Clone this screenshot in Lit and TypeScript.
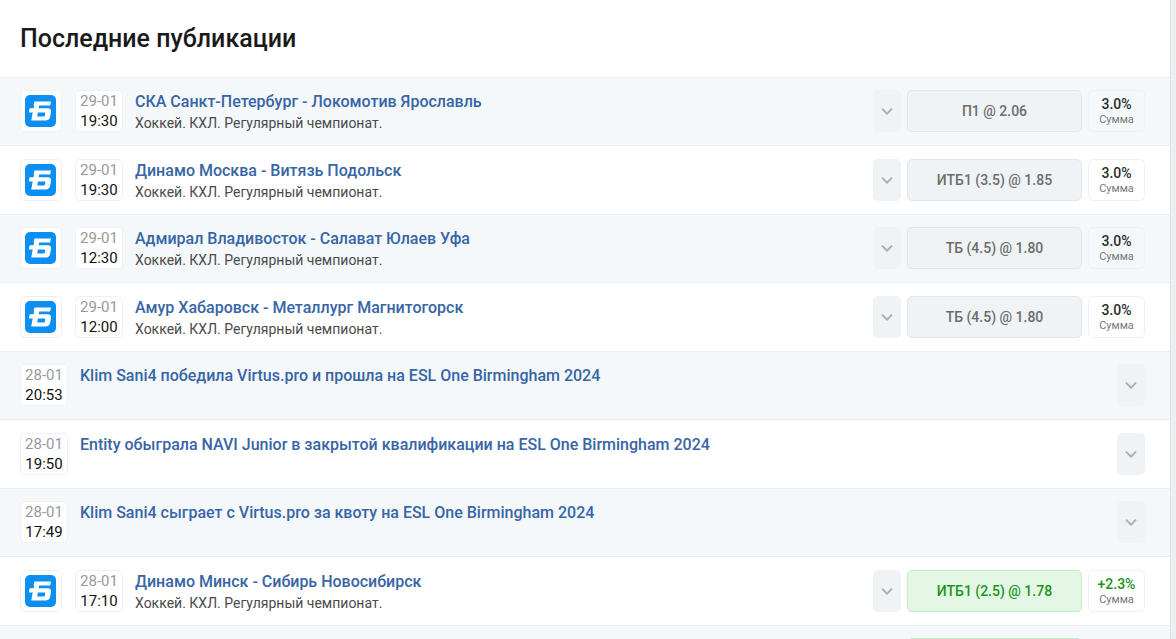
import { LitElement, html, css, nothing } from "lit";
import { customElement, property } from "lit/decorators.js";

interface Publication {
  date: string;
  time: string;
  title: string;
  league?: string;
  bet?: string;
  sum?: string;
  won?: boolean;
}

const KHL = "Хоккей. КХЛ. Регулярный чемпионат.";

const PUBLICATIONS: Publication[] = [
  { date: "29-01", time: "19:30", title: "СКА Санкт-Петербург - Локомотив Ярославль", league: KHL, bet: "П1 @ 2.06", sum: "3.0%" },
  { date: "29-01", time: "19:30", title: "Динамо Москва - Витязь Подольск", league: KHL, bet: "ИТБ1 (3.5) @ 1.85", sum: "3.0%" },
  { date: "29-01", time: "12:30", title: "Адмирал Владивосток - Салават Юлаев Уфа", league: KHL, bet: "ТБ (4.5) @ 1.80", sum: "3.0%" },
  { date: "29-01", time: "12:00", title: "Амур Хабаровск - Металлург Магнитогорск", league: KHL, bet: "ТБ (4.5) @ 1.80", sum: "3.0%" },
  { date: "28-01", time: "20:53", title: "Klim Sani4 победила Virtus.pro и прошла на ESL One Birmingham 2024" },
  { date: "28-01", time: "19:50", title: "Entity обыграла NAVI Junior в закрытой квалификации на ESL One Birmingham 2024" },
  { date: "28-01", time: "17:49", title: "Klim Sani4 сыграет с Virtus.pro за квоту на ESL One Birmingham 2024" },
  { date: "28-01", time: "17:10", title: "Динамо Минск - Сибирь Новосибирск", league: KHL, bet: "ИТБ1 (2.5) @ 1.78", sum: "+2.3%", won: true },
];

@customElement("publication-row")
class PublicationRow extends LitElement {
  @property({ attribute: false }) item!: Publication;

  static styles = css`
    :host {
      display: block;
    }
    .row {
      display: flex;
      align-items: flex-start;
    }
    .logo {
      flex: none;
      display: flex;
      align-items: center;
      justify-content: center;
      box-sizing: border-box;
      width: 42px;
      height: 42px;
      margin-right: 13px;
      background: #fff;
      border: 1px solid #edf1f5;
      border-radius: 5px;
    }
    .logo svg {
      display: block;
    }
    .when {
      flex: none;
      box-sizing: border-box;
      width: 48px;
      height: 42px;
      margin-right: 12px;
      background: #fff;
      border: 1px solid #edf1f5;
      border-radius: 5px;
      text-align: center;
      font-size: 15px;
      line-height: 20px;
      color: #111;
    }
    .date {
      display: block;
      color: #999;
    }
    .time {
      display: block;
    }
    .info {
      flex: 1;
      min-width: 0;
    }
    .title {
      display: block;
      font-size: 16px;
      font-weight: 500;
      line-height: 24px;
      color: #3765a6;
      text-decoration: none;
    }
    .league {
      font-size: 14px;
      line-height: 18px;
      color: #4a4a4a;
    }
    .actions {
      flex: none;
      display: flex;
      gap: 6px;
    }
    button {
      box-sizing: border-box;
      height: 42px;
      padding: 0;
      font: inherit;
      background: #eff3f6;
      border-radius: 5px;
    }
    .toggle {
      display: flex;
      align-items: center;
      justify-content: center;
      width: 28px;
      border: none;
    }
    .bet {
      width: 175px;
      border: 1px solid #e1e7eb;
      font-size: 14px;
      font-weight: 500;
      color: #6c6c6c;
    }
    .bet.won {
      background: #e4f7e4;
      border-color: #c3ebc5;
      color: #1c931c;
    }
    .sum {
      box-sizing: border-box;
      width: 57px;
      height: 42px;
      padding-top: 5px;
      border: 1px solid #edf1f5;
      border-radius: 5px;
      text-align: center;
      font-size: 11px;
      line-height: 16px;
      color: #777;
    }
    .value {
      display: block;
      font-size: 14px;
      line-height: 16px;
      font-weight: 500;
      color: #2c2c2c;
    }
    .value.won {
      color: #1c931c;
    }
  `;

  render() {
    const { date, time, title, league, bet, sum, won } = this.item;
    return html`
      <div class="row">
        ${bet
          ? html`<div class="logo">
              <svg width="32" height="32" viewBox="0 0 32 32" aria-hidden="true">
                <rect width="31" height="32" rx="5" fill="#0b8ff0" />
                <path
                  fill="#fff"
                  fill-rule="evenodd"
                  d="M9.4 6.5H26L25.2 10.6H14.2L13.7 13.2H22.8C25.4 13.2 26.4 14.6 26 17L25.2 21.6C24.7 24.4 23.2 25.6 20.4 25.6H6.2L7.7 17.6H3.8L4.6 13.2H8.6L9.1 10.6H8.6ZM12.9 17.6L12.2 21.4H18.8C19.5 21.4 19.8 21.1 19.9 20.5L20.2 18.7C20.3 18 20 17.6 19.3 17.6Z"
                />
              </svg>
            </div>`
          : nothing}
        <div class="when"><span class="date">${date}</span><span class="time">${time}</span></div>
        <div class="info">
          <a class="title" href="#">${title}</a>
          ${league ? html`<div class="league">${league}</div>` : nothing}
        </div>
        <div class="actions">
          <button class="toggle" type="button" aria-expanded="false">
            <svg width="12" height="8" viewBox="0 0 12 8" aria-hidden="true">
              <path d="M1 1.7L6 6.7L11 1.7" fill="none" stroke="#a9adb5" stroke-width="1.9" />
            </svg>
          </button>
          ${bet
            ? html`<button class="bet ${won ? "won" : ""}" type="button">${bet}</button>
                <div class="sum"><span class="value ${won ? "won" : ""}">${sum}</span>Сумма</div>`
            : nothing}
        </div>
      </div>
    `;
  }
}

@customElement("app-root")
class AppRoot extends LitElement {
  static styles = css`
    :host {
      display: block;
      box-sizing: border-box;
      height: 100vh;
      overflow: hidden;
      padding-right: 5px;
      background: #eceff2;
      font-family: Roboto, "Liberation Sans", sans-serif;
    }
    .panel {
      min-height: 100%;
      background: #fff;
      border-right: 1px solid #e0e4e8;
    }
    h1 {
      margin: 0;
      padding: 23px 20px 22px;
      font-size: 25px;
      line-height: 32px;
      font-weight: 500;
      color: #1a1a1a;
    }
    ul {
      margin: 0;
      padding: 0;
      list-style: none;
    }
    .item {
      padding: 13px 25px 13px 20px;
    }
    .item:nth-child(odd) {
      padding-top: 12px;
      background: #f4f8fb;
      border-top: 1px solid #e9eef2;
      border-bottom: 1px solid #e9eef2;
    }
    .next {
      display: flex;
      justify-content: flex-end;
    }
    .edge {
      width: 175px;
      height: 42px;
      margin-right: 63px;
      box-sizing: border-box;
      background: #e4f7e4;
      border: 1px solid #c3ebc5;
      border-radius: 5px;
    }
  `;

  render() {
    return html`
      <main class="panel">
        <h1>Последние публикации</h1>
        <ul>
          ${PUBLICATIONS.map((item) => html`<li class="item"><publication-row .item=${item}></publication-row></li>`)}
          <li class="item next"><div class="edge"></div></li>
        </ul>
      </main>
    `;
  }
}
